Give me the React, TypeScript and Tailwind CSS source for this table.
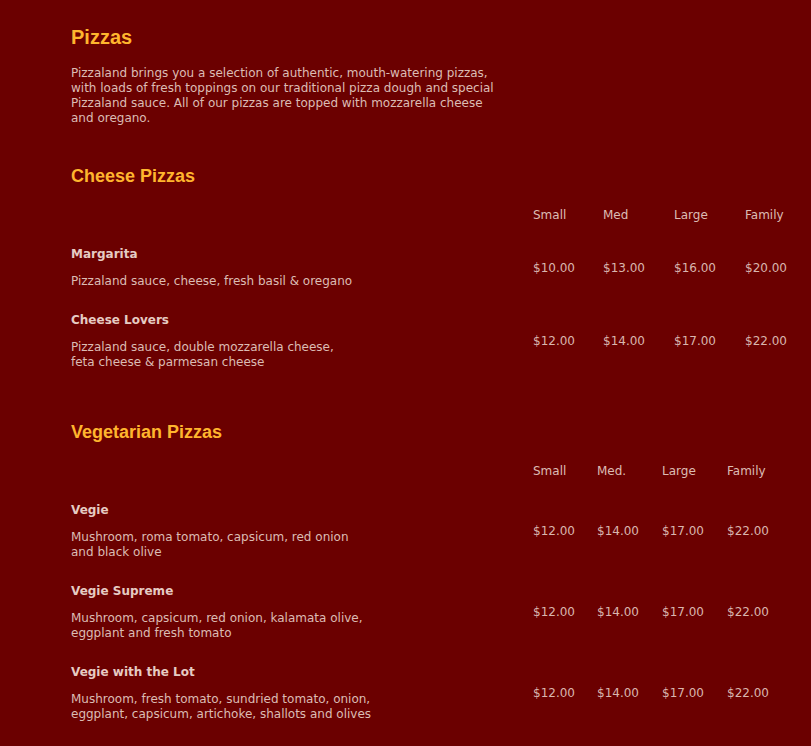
type Pizza = { name: string; desc: string[]; prices: string[] };

type Section = {
  title: string;
  sizes: string[];
  cols: string[];
  pizzas: Pizza[];
};

const sections: Section[] = [
  {
    title: "Cheese Pizzas",
    sizes: ["Small", "Med", "Large", "Family"],
    cols: ["w-[70px]", "w-[71px]", "w-[71px]", "w-[66px]"],
    pizzas: [
      {
        name: "Margarita",
        desc: ["Pizzaland sauce, cheese, fresh basil & oregano"],
        prices: ["$10.00", "$13.00", "$16.00", "$20.00"],
      },
      {
        name: "Cheese Lovers",
        desc: ["Pizzaland sauce, double mozzarella cheese,", "feta cheese & parmesan cheese"],
        prices: ["$12.00", "$14.00", "$17.00", "$22.00"],
      },
    ],
  },
  {
    title: "Vegetarian Pizzas",
    sizes: ["Small", "Med.", "Large", "Family"],
    cols: ["w-[64px]", "w-[65px]", "w-[65px]", "w-[66px]"],
    pizzas: [
      {
        name: "Vegie",
        desc: ["Mushroom, roma tomato, capsicum, red onion", "and black olive"],
        prices: ["$12.00", "$14.00", "$17.00", "$22.00"],
      },
      {
        name: "Vegie Supreme",
        desc: ["Mushroom, capsicum, red onion, kalamata olive,", "eggplant and fresh tomato"],
        prices: ["$12.00", "$14.00", "$17.00", "$22.00"],
      },
      {
        name: "Vegie with the Lot",
        desc: [
          "Mushroom, fresh tomato, sundried tomato, onion,",
          "eggplant, capsicum, artichoke, shallots and olives",
        ],
        prices: ["$12.00", "$14.00", "$17.00", "$22.00"],
      },
    ],
  },
];

function MenuSection({ section, first }: { section: Section; first: boolean }) {
  return (
    <div className={first ? "mt-[39px]" : "mt-[27px]"}>
      <h2 className="font-['Liberation_Sans',Arial,sans-serif] text-[18px] leading-[22px] font-bold text-[#ffb52e] mb-[21px]">
        {section.title}
      </h2>

      {/* size header */}
      <div className="flex pb-6">
        <div className="w-[462px]" />
        {section.sizes.map((s, i) => (
          <div key={s} className={`${section.cols[i]} text-[#dcbcb4]`}>
            {s}
          </div>
        ))}
      </div>

      {section.pizzas.map((p) => (
        <div key={p.name} className="flex items-center pb-6">
          <div className="w-[462px]">
            <div className="font-bold text-[#e6cbc3] mb-3">{p.name}</div>
            <div className="text-[#dcbcb4]">
              {p.desc.map((line, i) => (
                <div key={i} className="whitespace-nowrap">
                  {line}
                </div>
              ))}
            </div>
          </div>
          {p.prices.map((price, i) => (
            <div key={i} className={`${section.cols[i]} text-[#d9b6ae]`}>
              {price}
            </div>
          ))}
        </div>
      ))}
    </div>
  );
}

export default function App() {
  return (
    <div className="min-h-screen bg-[#6b0000] font-['DejaVu_Sans',Verdana,sans-serif] text-[12px] leading-[15px]">
      <div className="pl-[71px] pt-[25px]">
        <h1 className="font-['Liberation_Sans',Arial,sans-serif] text-[20px] leading-[24px] font-bold text-[#ffb52e] mb-[17px]">
          Pizzas
        </h1>
        <p className="text-[#dcbcb4]">
          Pizzaland brings you a selection of authentic, mouth-watering pizzas,
          <br />
          with loads of fresh toppings on our traditional pizza dough and special
          <br />
          Pizzaland sauce. All of our pizzas are topped with mozzarella cheese
          <br />
          and oregano.
        </p>

        {sections.map((s, i) => (
          <MenuSection key={s.title} section={s} first={i === 0} />
        ))}
      </div>
    </div>
  );
}
